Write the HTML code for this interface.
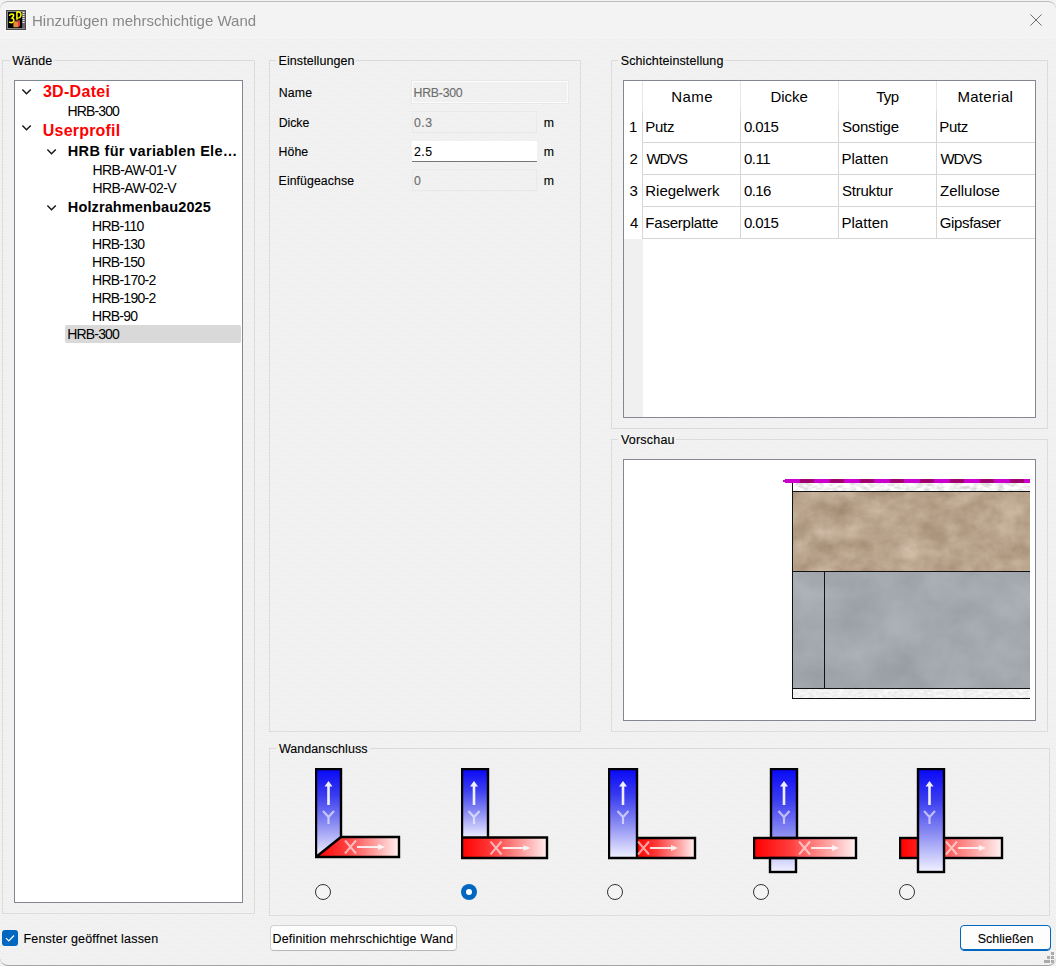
<!DOCTYPE html><html><head><meta charset="utf-8"><style>
html,body{margin:0;padding:0;}
body{width:1056px;height:966px;position:relative;overflow:hidden;background:#f0f0f0;font-family:"Liberation Sans", sans-serif;}
div{font-family:"Liberation Sans", sans-serif;}
</style></head><body>
<svg style="position:absolute;left:0;top:39px" width="1056" height="927"><defs><pattern id="dp" width="6" height="6" patternUnits="userSpaceOnUse"><rect width="6" height="6" fill="#f2f2f2"/><rect x="0" y="0" width="1" height="1" fill="#eaeaea"/><rect x="3" y="0" width="1" height="1" fill="#eaeaea"/><rect x="1" y="2" width="1" height="1" fill="#eaeaea"/><rect x="4" y="2" width="1" height="1" fill="#eaeaea"/><rect x="2" y="4" width="1" height="1" fill="#eaeaea"/><rect x="5" y="4" width="1" height="1" fill="#eaeaea"/></pattern></defs><rect width="1056" height="927" fill="url(#dp)"/></svg>
<div style="position:absolute;left:0px;top:0px;width:1056px;height:39px;box-sizing:border-box;background:#f3f3f3;"></div>
<div style="position:absolute;left:0;top:1px;width:1056px;height:965px;box-sizing:border-box;border-top:1px solid #bdbdbd;border-bottom:1px solid #a4a4a4;border-radius:8px;"></div>
<svg style="position:absolute;left:5px;top:9px" width="22" height="22" viewBox="-1 -1 22 22">
<rect x="-1" y="-1" width="22" height="22" fill="#fafafa"/>
<rect x="0" y="0" width="20" height="20" fill="#474747"/>
<rect x="1" y="1" width="18" height="18" fill="#8a8a8a"/>
<rect x="2" y="2" width="14.5" height="16" fill="#000"/>
<rect x="16.5" y="2" width="2.5" height="16" fill="#6a6a6a"/>
<rect x="16.5" y="2" width="2" height="1" fill="#e8e8e8"/><rect x="16.5" y="4" width="2" height="1" fill="#e8e8e8"/><rect x="16.5" y="6" width="2" height="1" fill="#e8e8e8"/><rect x="16.5" y="8" width="2" height="1" fill="#e8e8e8"/><rect x="16.5" y="10" width="2" height="1" fill="#e8e8e8"/><rect x="16.5" y="12" width="2" height="1" fill="#e8e8e8"/>
<path d="M3.6 5.2 Q5.5 3.3 7.3 4.4 Q8.3 6.2 6 8 Q8.6 9 7.6 11.6 Q6 13.4 3.6 12.2" fill="none" stroke="#ffff00" stroke-width="1.5" stroke-linecap="round"/>
<path d="M10.9 1.6 L10.9 9.8 M10.9 1.8 Q15.3 1.8 15 5 Q14.6 8.2 11 8.2" fill="none" stroke="#ffff00" stroke-width="1.5"/>
<path d="M7.4 11.5 Q10 10.2 13.8 10.6 L13.8 15.8 L11.9 17.2 L7.4 17.2 Z" fill="#e0902c"/>
<path d="M11.9 11.2 L14 10.6 L14 15.8 L11.9 17.2 Z" fill="#f03050"/>
<path d="M7.8 11.6 Q10.5 10.4 13.6 10.8 L12 12 Q9.5 12.2 7.8 11.6 Z" fill="#9a4a2a"/>
</svg>
<div style="position:absolute;left:31.80px;top:12px;height:17px;line-height:17px;font-size:15px;font-weight:normal;color:#888888;white-space:nowrap;letter-spacing:0.014px;-webkit-text-stroke:0.12px currentColor;-webkit-text-stroke:0;will-change:transform;">Hinzufügen mehrschichtige Wand</div>
<svg style="position:absolute;left:1028px;top:12px" width="16" height="16" viewBox="0 0 16 16"><path d="M2.5 2.5 L13.5 13.5 M13.5 2.5 L2.5 13.5" stroke="#6e6e6e" stroke-width="1" fill="none"/></svg>
<div style="position:absolute;left:2px;top:60px;width:8px;height:1px;box-sizing:border-box;background:#dcdcdc;"></div>
<div style="position:absolute;left:54px;top:60px;width:201px;height:1px;box-sizing:border-box;background:#dcdcdc;"></div>
<div style="position:absolute;left:2px;top:60px;width:1px;height:854px;box-sizing:border-box;background:#dcdcdc;"></div>
<div style="position:absolute;left:254px;top:60px;width:1px;height:854px;box-sizing:border-box;background:#dcdcdc;"></div>
<div style="position:absolute;left:2px;top:913px;width:253px;height:1px;box-sizing:border-box;background:#dcdcdc;"></div>
<div style="position:absolute;left:12.20px;top:54px;height:14px;line-height:14px;font-size:12.5px;font-weight:normal;color:#000;white-space:nowrap;letter-spacing:0.125px;-webkit-text-stroke:0.12px currentColor;">Wände</div>
<div style="position:absolute;left:269px;top:60px;width:7px;height:1px;box-sizing:border-box;background:#dcdcdc;"></div>
<div style="position:absolute;left:356px;top:60px;width:225px;height:1px;box-sizing:border-box;background:#dcdcdc;"></div>
<div style="position:absolute;left:269px;top:60px;width:1px;height:672px;box-sizing:border-box;background:#dcdcdc;"></div>
<div style="position:absolute;left:580px;top:60px;width:1px;height:672px;box-sizing:border-box;background:#dcdcdc;"></div>
<div style="position:absolute;left:269px;top:731px;width:312px;height:1px;box-sizing:border-box;background:#dcdcdc;"></div>
<div style="position:absolute;left:278.50px;top:54px;height:14px;line-height:14px;font-size:12.5px;font-weight:normal;color:#000;white-space:nowrap;letter-spacing:0.079px;-webkit-text-stroke:0.12px currentColor;">Einstellungen</div>
<div style="position:absolute;left:611px;top:60px;width:7px;height:1px;box-sizing:border-box;background:#dcdcdc;"></div>
<div style="position:absolute;left:725px;top:60px;width:323px;height:1px;box-sizing:border-box;background:#dcdcdc;"></div>
<div style="position:absolute;left:611px;top:60px;width:1px;height:369px;box-sizing:border-box;background:#dcdcdc;"></div>
<div style="position:absolute;left:1047px;top:60px;width:1px;height:369px;box-sizing:border-box;background:#dcdcdc;"></div>
<div style="position:absolute;left:611px;top:428px;width:437px;height:1px;box-sizing:border-box;background:#dcdcdc;"></div>
<div style="position:absolute;left:620.70px;top:54px;height:14px;line-height:14px;font-size:12.5px;font-weight:normal;color:#000;white-space:nowrap;letter-spacing:0.112px;-webkit-text-stroke:0.12px currentColor;">Schichteinstellung</div>
<div style="position:absolute;left:611px;top:439px;width:7px;height:1px;box-sizing:border-box;background:#dcdcdc;"></div>
<div style="position:absolute;left:676px;top:439px;width:372px;height:1px;box-sizing:border-box;background:#dcdcdc;"></div>
<div style="position:absolute;left:611px;top:439px;width:1px;height:293px;box-sizing:border-box;background:#dcdcdc;"></div>
<div style="position:absolute;left:1047px;top:439px;width:1px;height:293px;box-sizing:border-box;background:#dcdcdc;"></div>
<div style="position:absolute;left:611px;top:731px;width:437px;height:1px;box-sizing:border-box;background:#dcdcdc;"></div>
<div style="position:absolute;left:621.00px;top:433px;height:14px;line-height:14px;font-size:12.5px;font-weight:normal;color:#000;white-space:nowrap;letter-spacing:0.200px;-webkit-text-stroke:0.12px currentColor;">Vorschau</div>
<div style="position:absolute;left:269px;top:748px;width:7px;height:1px;box-sizing:border-box;background:#dcdcdc;"></div>
<div style="position:absolute;left:370px;top:748px;width:680px;height:1px;box-sizing:border-box;background:#dcdcdc;"></div>
<div style="position:absolute;left:269px;top:748px;width:1px;height:168px;box-sizing:border-box;background:#dcdcdc;"></div>
<div style="position:absolute;left:1049px;top:748px;width:1px;height:168px;box-sizing:border-box;background:#dcdcdc;"></div>
<div style="position:absolute;left:269px;top:915px;width:781px;height:1px;box-sizing:border-box;background:#dcdcdc;"></div>
<div style="position:absolute;left:278.90px;top:742px;height:14px;line-height:14px;font-size:12.5px;font-weight:normal;color:#000;white-space:nowrap;letter-spacing:0.067px;-webkit-text-stroke:0.12px currentColor;">Wandanschluss</div>
<div style="position:absolute;left:14px;top:80px;width:229px;height:823px;box-sizing:border-box;border:1px solid #828790;background:#fff;"></div>
<svg style="position:absolute;left:21px;top:87.5px" width="12" height="8" viewBox="0 0 12 8"><path d="M1.4 1.6 L5.5 5.7 L9.8 1.6" stroke="#161616" stroke-width="1.45" fill="none"/></svg>
<div style="position:absolute;left:42.90px;top:83px;height:17px;line-height:17px;font-size:16px;font-weight:bold;color:#ff0000;white-space:nowrap;letter-spacing:0.314px;">3D-Datei</div>
<div style="position:absolute;left:67.40px;top:103px;height:16px;line-height:16px;font-size:14px;font-weight:normal;color:#000;white-space:nowrap;letter-spacing:-0.850px;-webkit-text-stroke:0.12px currentColor;-webkit-text-stroke:0;">HRB-300</div>
<svg style="position:absolute;left:21px;top:123.5px" width="12" height="8" viewBox="0 0 12 8"><path d="M1.4 1.6 L5.5 5.7 L9.8 1.6" stroke="#161616" stroke-width="1.45" fill="none"/></svg>
<div style="position:absolute;left:42.80px;top:122px;height:17px;line-height:17px;font-size:16px;font-weight:bold;color:#ff0000;white-space:nowrap;letter-spacing:0.200px;">Userprofil</div>
<svg style="position:absolute;left:46px;top:147.5px" width="12" height="8" viewBox="0 0 12 8"><path d="M1.4 1.6 L5.5 5.7 L9.8 1.6" stroke="#161616" stroke-width="1.45" fill="none"/></svg>
<div style="position:absolute;left:67.80px;top:143px;height:16px;line-height:16px;font-size:14.5px;font-weight:bold;color:#000;white-space:nowrap;letter-spacing:0.324px;">HRB für variablen Ele…</div>
<div style="position:absolute;left:92.60px;top:162px;height:16px;line-height:16px;font-size:14px;font-weight:normal;color:#000;white-space:nowrap;letter-spacing:-0.630px;-webkit-text-stroke:0.12px currentColor;-webkit-text-stroke:0;">HRB-AW-01-V</div>
<div style="position:absolute;left:92.60px;top:180px;height:16px;line-height:16px;font-size:14px;font-weight:normal;color:#000;white-space:nowrap;letter-spacing:-0.630px;-webkit-text-stroke:0.12px currentColor;-webkit-text-stroke:0;">HRB-AW-02-V</div>
<svg style="position:absolute;left:46px;top:203.5px" width="12" height="8" viewBox="0 0 12 8"><path d="M1.4 1.6 L5.5 5.7 L9.8 1.6" stroke="#161616" stroke-width="1.45" fill="none"/></svg>
<div style="position:absolute;left:67.80px;top:199px;height:16px;line-height:16px;font-size:14.5px;font-weight:bold;color:#000;white-space:nowrap;letter-spacing:0.125px;">Holzrahmenbau2025</div>
<div style="position:absolute;left:92.10px;top:218px;height:16px;line-height:16px;font-size:14px;font-weight:normal;color:#000;white-space:nowrap;letter-spacing:-0.725px;-webkit-text-stroke:0.12px currentColor;-webkit-text-stroke:0;">HRB-110</div>
<div style="position:absolute;left:92.10px;top:236px;height:16px;line-height:16px;font-size:14px;font-weight:normal;color:#000;white-space:nowrap;letter-spacing:-0.767px;-webkit-text-stroke:0.12px currentColor;-webkit-text-stroke:0;">HRB-130</div>
<div style="position:absolute;left:92.10px;top:254px;height:16px;line-height:16px;font-size:14px;font-weight:normal;color:#000;white-space:nowrap;letter-spacing:-0.767px;-webkit-text-stroke:0.12px currentColor;-webkit-text-stroke:0;">HRB-150</div>
<div style="position:absolute;left:92.10px;top:272px;height:16px;line-height:16px;font-size:14px;font-weight:normal;color:#000;white-space:nowrap;letter-spacing:-0.738px;-webkit-text-stroke:0.12px currentColor;-webkit-text-stroke:0;">HRB-170-2</div>
<div style="position:absolute;left:92.10px;top:290px;height:16px;line-height:16px;font-size:14px;font-weight:normal;color:#000;white-space:nowrap;letter-spacing:-0.738px;-webkit-text-stroke:0.12px currentColor;-webkit-text-stroke:0;">HRB-190-2</div>
<div style="position:absolute;left:92.10px;top:308px;height:16px;line-height:16px;font-size:14px;font-weight:normal;color:#000;white-space:nowrap;letter-spacing:-0.760px;-webkit-text-stroke:0.12px currentColor;-webkit-text-stroke:0;">HRB-90</div>
<div style="position:absolute;left:65px;top:325px;width:176px;height:18px;background:#d9d9d9;border-radius:2px;"></div>
<div style="position:absolute;left:67.20px;top:326px;height:16px;line-height:16px;font-size:14px;font-weight:normal;color:#000;white-space:nowrap;letter-spacing:-0.817px;-webkit-text-stroke:0.12px currentColor;-webkit-text-stroke:0;">HRB-300</div>
<div style="position:absolute;left:278.70px;top:86px;height:14px;line-height:14px;font-size:12.3px;font-weight:normal;color:#000;white-space:nowrap;letter-spacing:0.167px;-webkit-text-stroke:0.12px currentColor;">Name</div>
<div style="position:absolute;left:278.70px;top:116px;height:14px;line-height:14px;font-size:12.3px;font-weight:normal;color:#000;white-space:nowrap;letter-spacing:-0.050px;-webkit-text-stroke:0.12px currentColor;">Dicke</div>
<div style="position:absolute;left:278.60px;top:145px;height:14px;line-height:14px;font-size:12.3px;font-weight:normal;color:#000;white-space:nowrap;letter-spacing:0.067px;-webkit-text-stroke:0.12px currentColor;">Höhe</div>
<div style="position:absolute;left:278.60px;top:174px;height:14px;line-height:14px;font-size:12.3px;font-weight:normal;color:#000;white-space:nowrap;letter-spacing:0.082px;-webkit-text-stroke:0.12px currentColor;">Einfügeachse</div>
<div style="position:absolute;left:411px;top:80px;width:158px;height:24px;box-sizing:border-box;border:1px solid #e9e9e9;"></div>
<div style="position:absolute;left:412px;top:81px;width:156px;height:22px;box-sizing:border-box;border:1px solid #fcfcfc;"></div>
<div style="position:absolute;left:413.50px;top:86px;height:14px;line-height:14px;font-size:12.3px;font-weight:normal;color:#6d6d6d;white-space:nowrap;letter-spacing:-0.233px;-webkit-text-stroke:0.12px currentColor;">HRB-300</div>
<div style="position:absolute;left:412px;top:111px;width:125px;height:22px;box-sizing:border-box;border:1px solid #e9e9e9;"></div>
<div style="position:absolute;left:414.00px;top:116px;height:14px;line-height:14px;font-size:12.3px;font-weight:normal;color:#6d6d6d;white-space:nowrap;letter-spacing:0.450px;-webkit-text-stroke:0.12px currentColor;">0.3</div>
<div style="position:absolute;left:412px;top:141px;width:125px;height:21px;box-sizing:border-box;background:#fff;border-bottom:1px solid #767676;"></div>
<div style="position:absolute;left:413.90px;top:145px;height:14px;line-height:14px;font-size:12.3px;font-weight:normal;color:#000;white-space:nowrap;letter-spacing:0.500px;-webkit-text-stroke:0.12px currentColor;">2.5</div>
<div style="position:absolute;left:412px;top:169px;width:125px;height:22px;box-sizing:border-box;border:1px solid #e9e9e9;"></div>
<div style="position:absolute;left:414.00px;top:174px;height:14px;line-height:14px;font-size:12.3px;font-weight:normal;color:#6d6d6d;white-space:nowrap;letter-spacing:0.000px;-webkit-text-stroke:0.12px currentColor;">0</div>
<div style="position:absolute;left:543.70px;top:116px;height:14px;line-height:14px;font-size:12.3px;font-weight:normal;color:#000;white-space:nowrap;letter-spacing:0.000px;-webkit-text-stroke:0.12px currentColor;">m</div>
<div style="position:absolute;left:543.70px;top:145px;height:14px;line-height:14px;font-size:12.3px;font-weight:normal;color:#000;white-space:nowrap;letter-spacing:0.000px;-webkit-text-stroke:0.12px currentColor;">m</div>
<div style="position:absolute;left:543.70px;top:174px;height:14px;line-height:14px;font-size:12.3px;font-weight:normal;color:#000;white-space:nowrap;letter-spacing:0.000px;-webkit-text-stroke:0.12px currentColor;">m</div>
<div style="position:absolute;left:623px;top:80px;width:413px;height:338px;box-sizing:border-box;border:1px solid #828790;background:#fff;"></div>
<div style="position:absolute;left:624px;top:239px;width:19px;height:178px;box-sizing:border-box;background:#f0f0f0;"></div>
<div style="position:absolute;left:642px;top:81px;width:1px;height:30px;box-sizing:border-box;background:#e6e6e6;"></div>
<div style="position:absolute;left:642px;top:111px;width:1px;height:128px;box-sizing:border-box;background:#d6d6d6;"></div>
<div style="position:absolute;left:740px;top:81px;width:1px;height:30px;box-sizing:border-box;background:#e6e6e6;"></div>
<div style="position:absolute;left:740px;top:111px;width:1px;height:128px;box-sizing:border-box;background:#d6d6d6;"></div>
<div style="position:absolute;left:838px;top:81px;width:1px;height:30px;box-sizing:border-box;background:#e6e6e6;"></div>
<div style="position:absolute;left:838px;top:111px;width:1px;height:128px;box-sizing:border-box;background:#d6d6d6;"></div>
<div style="position:absolute;left:936px;top:81px;width:1px;height:30px;box-sizing:border-box;background:#e6e6e6;"></div>
<div style="position:absolute;left:936px;top:111px;width:1px;height:128px;box-sizing:border-box;background:#d6d6d6;"></div>
<div style="position:absolute;left:643px;top:142px;width:392px;height:1px;box-sizing:border-box;background:#d6d6d6;"></div>
<div style="position:absolute;left:643px;top:174px;width:392px;height:1px;box-sizing:border-box;background:#d6d6d6;"></div>
<div style="position:absolute;left:643px;top:206px;width:392px;height:1px;box-sizing:border-box;background:#d6d6d6;"></div>
<div style="position:absolute;left:643px;top:238px;width:392px;height:1px;box-sizing:border-box;background:#d6d6d6;"></div>
<div style="position:absolute;left:671.20px;top:88px;height:17px;line-height:17px;font-size:15px;font-weight:normal;color:#000;white-space:nowrap;letter-spacing:0.433px;-webkit-text-stroke:0.12px currentColor;-webkit-text-stroke:0;">Name</div>
<div style="position:absolute;left:770.50px;top:88px;height:17px;line-height:17px;font-size:15px;font-weight:normal;color:#000;white-space:nowrap;letter-spacing:-0.025px;-webkit-text-stroke:0.12px currentColor;-webkit-text-stroke:0;">Dicke</div>
<div style="position:absolute;left:876.20px;top:88px;height:17px;line-height:17px;font-size:15px;font-weight:normal;color:#000;white-space:nowrap;letter-spacing:-0.650px;-webkit-text-stroke:0.12px currentColor;-webkit-text-stroke:0;">Typ</div>
<div style="position:absolute;left:957.40px;top:88px;height:17px;line-height:17px;font-size:15px;font-weight:normal;color:#000;white-space:nowrap;letter-spacing:0.314px;-webkit-text-stroke:0.12px currentColor;-webkit-text-stroke:0;">Material</div>
<div style="position:absolute;left:629.10px;top:118px;height:17px;line-height:17px;font-size:15px;font-weight:normal;color:#000;white-space:nowrap;letter-spacing:0.000px;-webkit-text-stroke:0.12px currentColor;-webkit-text-stroke:0;">1</div>
<div style="position:absolute;left:645.30px;top:118px;height:17px;line-height:17px;font-size:15px;font-weight:normal;color:#000;white-space:nowrap;letter-spacing:-0.300px;-webkit-text-stroke:0.12px currentColor;-webkit-text-stroke:0;">Putz</div>
<div style="position:absolute;left:743.90px;top:118px;height:17px;line-height:17px;font-size:15px;font-weight:normal;color:#000;white-space:nowrap;letter-spacing:-0.625px;-webkit-text-stroke:0.12px currentColor;-webkit-text-stroke:0;">0.015</div>
<div style="position:absolute;left:841.90px;top:118px;height:17px;line-height:17px;font-size:15px;font-weight:normal;color:#000;white-space:nowrap;letter-spacing:-0.171px;-webkit-text-stroke:0.12px currentColor;-webkit-text-stroke:0;">Sonstige</div>
<div style="position:absolute;left:939.30px;top:118px;height:17px;line-height:17px;font-size:15px;font-weight:normal;color:#000;white-space:nowrap;letter-spacing:-0.333px;-webkit-text-stroke:0.12px currentColor;-webkit-text-stroke:0;">Putz</div>
<div style="position:absolute;left:629.50px;top:150px;height:17px;line-height:17px;font-size:15px;font-weight:normal;color:#000;white-space:nowrap;letter-spacing:0.000px;-webkit-text-stroke:0.12px currentColor;-webkit-text-stroke:0;">2</div>
<div style="position:absolute;left:646.40px;top:150px;height:17px;line-height:17px;font-size:15px;font-weight:normal;color:#000;white-space:nowrap;letter-spacing:-1.133px;-webkit-text-stroke:0.12px currentColor;-webkit-text-stroke:0;">WDVS</div>
<div style="position:absolute;left:743.90px;top:150px;height:17px;line-height:17px;font-size:15px;font-weight:normal;color:#000;white-space:nowrap;letter-spacing:-0.500px;-webkit-text-stroke:0.12px currentColor;-webkit-text-stroke:0;">0.11</div>
<div style="position:absolute;left:841.40px;top:150px;height:17px;line-height:17px;font-size:15px;font-weight:normal;color:#000;white-space:nowrap;letter-spacing:0.050px;-webkit-text-stroke:0.12px currentColor;-webkit-text-stroke:0;">Platten</div>
<div style="position:absolute;left:940.40px;top:150px;height:17px;line-height:17px;font-size:15px;font-weight:normal;color:#000;white-space:nowrap;letter-spacing:-1.067px;-webkit-text-stroke:0.12px currentColor;-webkit-text-stroke:0;">WDVS</div>
<div style="position:absolute;left:629.60px;top:182px;height:17px;line-height:17px;font-size:15px;font-weight:normal;color:#000;white-space:nowrap;letter-spacing:0.000px;-webkit-text-stroke:0.12px currentColor;-webkit-text-stroke:0;">3</div>
<div style="position:absolute;left:645.30px;top:182px;height:17px;line-height:17px;font-size:15px;font-weight:normal;color:#000;white-space:nowrap;letter-spacing:-0.011px;-webkit-text-stroke:0.12px currentColor;-webkit-text-stroke:0;">Riegelwerk</div>
<div style="position:absolute;left:743.90px;top:182px;height:17px;line-height:17px;font-size:15px;font-weight:normal;color:#000;white-space:nowrap;letter-spacing:-0.600px;-webkit-text-stroke:0.12px currentColor;-webkit-text-stroke:0;">0.16</div>
<div style="position:absolute;left:841.90px;top:182px;height:17px;line-height:17px;font-size:15px;font-weight:normal;color:#000;white-space:nowrap;letter-spacing:-0.200px;-webkit-text-stroke:0.12px currentColor;-webkit-text-stroke:0;">Struktur</div>
<div style="position:absolute;left:940.00px;top:182px;height:17px;line-height:17px;font-size:15px;font-weight:normal;color:#000;white-space:nowrap;letter-spacing:-0.013px;-webkit-text-stroke:0.12px currentColor;-webkit-text-stroke:0;">Zellulose</div>
<div style="position:absolute;left:629.90px;top:214px;height:17px;line-height:17px;font-size:15px;font-weight:normal;color:#000;white-space:nowrap;letter-spacing:0.000px;-webkit-text-stroke:0.12px currentColor;-webkit-text-stroke:0;">4</div>
<div style="position:absolute;left:645.30px;top:214px;height:17px;line-height:17px;font-size:15px;font-weight:normal;color:#000;white-space:nowrap;letter-spacing:-0.210px;-webkit-text-stroke:0.12px currentColor;-webkit-text-stroke:0;">Faserplatte</div>
<div style="position:absolute;left:743.90px;top:214px;height:17px;line-height:17px;font-size:15px;font-weight:normal;color:#000;white-space:nowrap;letter-spacing:-0.625px;-webkit-text-stroke:0.12px currentColor;-webkit-text-stroke:0;">0.015</div>
<div style="position:absolute;left:841.40px;top:214px;height:17px;line-height:17px;font-size:15px;font-weight:normal;color:#000;white-space:nowrap;letter-spacing:0.050px;-webkit-text-stroke:0.12px currentColor;-webkit-text-stroke:0;">Platten</div>
<div style="position:absolute;left:939.80px;top:214px;height:17px;line-height:17px;font-size:15px;font-weight:normal;color:#000;white-space:nowrap;letter-spacing:-0.375px;-webkit-text-stroke:0.12px currentColor;-webkit-text-stroke:0;">Gipsfaser</div>
<div style="position:absolute;left:623px;top:459px;width:413px;height:262px;box-sizing:border-box;border:1px solid #828790;background:#fff;"></div>
<svg style="position:absolute;left:624px;top:460px" width="411" height="260">
<defs>
<filter id="fbrn" x="0" y="0" width="100%" height="100%" color-interpolation-filters="sRGB">
<feTurbulence type="fractalNoise" baseFrequency="0.04 0.05" numOctaves="5" seed="11" result="n"/>
<feColorMatrix in="n" type="matrix" values="0.22 0 0 0 0.615  0.24 0 0 0 0.52  0.26 0 0 0 0.42  0 0 0 0 1"/>
</filter>
<filter id="fgry" x="0" y="0" width="100%" height="100%" color-interpolation-filters="sRGB">
<feTurbulence type="fractalNoise" baseFrequency="0.02 0.025" numOctaves="4" seed="2" result="n"/>
<feColorMatrix in="n" type="matrix" values="0.12 0 0 0 0.58  0.12 0 0 0 0.6  0.12 0 0 0 0.625  0 0 0 0 1"/>
</filter>
<filter id="fput" x="0" y="0" width="100%" height="100%" color-interpolation-filters="sRGB">
<feTurbulence type="fractalNoise" baseFrequency="0.15 0.3" numOctaves="2" seed="5" result="n"/>
<feColorMatrix in="n" type="matrix" values="0.35 0 0 0 0.78  0.35 0 0 0 0.78  0.35 0 0 0 0.78  0 0 0 0 1"/>
</filter>
<filter id="fput2" x="0" y="0" width="100%" height="100%" color-interpolation-filters="sRGB">
<feTurbulence type="fractalNoise" baseFrequency="0.2 0.4" numOctaves="2" seed="9" result="n"/>
<feColorMatrix in="n" type="matrix" values="0.15 0 0 0 0.87  0.15 0 0 0 0.87  0.15 0 0 0 0.87  0 0 0 0 1"/>
</filter>
</defs>
<rect x="168" y="23" width="238" height="8" fill="#f2f2f2" filter="url(#fput)"/>
<rect x="168" y="32" width="238" height="79" filter="url(#fbrn)"/>
<rect x="168" y="112" width="238" height="116" filter="url(#fgry)"/>
<rect x="168" y="229" width="238" height="9" fill="#f2f2f2" filter="url(#fput2)"/>
<rect x="168" y="23" width="1" height="216" fill="#111"/>
<rect x="168" y="31" width="238" height="1" fill="#111"/>
<rect x="168" y="111" width="238" height="1" fill="#111"/>
<rect x="200" y="112" width="1" height="116" fill="#111"/>
<rect x="168" y="228" width="238" height="1" fill="#111"/>
<rect x="168" y="238" width="238" height="1" fill="#111"/>
<rect x="161" y="19" width="245" height="4" fill="#cc00cc"/>
<rect x="159" y="20" width="3" height="2" fill="#cc00cc"/>
<path d="M176 19h14v4h-14z M206 19h14v4h-14z M236 19h14v4h-14z M266 19h14v4h-14z M296 19h14v4h-14z M326 19h14v4h-14z M356 19h14v4h-14z M386 19h14v4h-14z" fill="#a0006c"/>
</svg>
<svg width="0" height="0" style="position:absolute"><defs>
<linearGradient id="bl" x1="0" y1="0" x2="0" y2="1"><stop offset="0" stop-color="#0808f6"/><stop offset="0.3" stop-color="#3a3cf0"/><stop offset="0.6" stop-color="#8486f2"/><stop offset="1" stop-color="#f2f2ff"/></linearGradient>
<linearGradient id="rd" x1="0" y1="0" x2="1" y2="0"><stop offset="0" stop-color="#ff0000"/><stop offset="0.35" stop-color="#ff3c3c"/><stop offset="0.7" stop-color="#ff9c9c"/><stop offset="1" stop-color="#fff2f2"/></linearGradient>
</defs></svg>
<svg style="position:absolute;left:315px;top:768px" width="86" height="91" viewBox="0 0 86 91"><path d="M1 1 H26 V69 L1 89 Z" fill="url(#bl)"/><path d="M26 69 H84 V89 H1 Z" fill="url(#rd)"/><path d="M1 1 H26 V69 H84 V89 H1 Z M26 69 L1 89" stroke="#000" stroke-width="2.4" fill="none" stroke-linejoin="miter"/><path d="M13.5 13 L17.5 18.5 L14.8 18.5 L14.8 37 L12.2 37 L12.2 18.5 L9.5 18.5 Z" fill="#fff" opacity="0.92"/><path d="M8.0 43 L13.5 49 L19.0 43 M13.5 49 L13.5 56" stroke="#fff" stroke-width="2.2" fill="none" opacity="0.6"/><path d="M30 72.5 L41 85.5 M41 72.5 L30 85.5" stroke="#fff" stroke-width="2" fill="none" opacity="0.6"/><path d="M42 78 L63 78 L63 76 L70 79 L63 82 L63 80 L42 80 Z" fill="#fff" opacity="0.85"/></svg>
<svg style="position:absolute;left:461px;top:768px" width="88" height="92" viewBox="0 0 88 92"><rect x="1" y="1" width="26" height="69.5" fill="url(#bl)"/><rect x="1" y="69.5" width="86" height="20.5" fill="url(#rd)"/><path d="M1 1 H27 V69.5 H86 V90 H1 Z M1 69.5 H27" stroke="#000" stroke-width="2.4" fill="none"/><path d="M13 13 L17 18.5 L14.3 18.5 L14.3 37 L11.7 37 L11.7 18.5 L9 18.5 Z" fill="#fff" opacity="0.92"/><path d="M7.5 43 L13 49 L18.5 43 M13 49 L13 56" stroke="#fff" stroke-width="2.2" fill="none" opacity="0.6"/><path d="M29.5 73.5 L40.5 86.5 M40.5 73.5 L29.5 86.5" stroke="#fff" stroke-width="2" fill="none" opacity="0.6"/><path d="M41.5 79 L62.5 79 L62.5 77 L69.5 80 L62.5 83 L62.5 81 L41.5 81 Z" fill="#fff" opacity="0.85"/></svg>
<svg style="position:absolute;left:608px;top:768px" width="89" height="92" viewBox="0 0 89 92"><rect x="1" y="1" width="28" height="89" fill="url(#bl)"/><rect x="29" y="70" width="58" height="20" fill="url(#rd)"/><path d="M1 1 H29 V70 H87 V90 H1 Z M29 70 V90" stroke="#000" stroke-width="2.4" fill="none"/><path d="M15 13 L19 18.5 L16.3 18.5 L16.3 37 L13.7 37 L13.7 18.5 L11 18.5 Z" fill="#fff" opacity="0.92"/><path d="M9.5 43 L15 49 L20.5 43 M15 49 L15 56" stroke="#fff" stroke-width="2.2" fill="none" opacity="0.6"/><path d="M30 73.5 L41 86.5 M41 73.5 L30 86.5" stroke="#fff" stroke-width="2" fill="none" opacity="0.6"/><path d="M42 79 L63 79 L63 77 L70 80 L63 83 L63 81 L42 81 Z" fill="#fff" opacity="0.85"/></svg>
<svg style="position:absolute;left:753px;top:768px" width="105" height="106" viewBox="0 0 105 106"><rect x="18" y="1" width="26" height="103" fill="url(#bl)"/><rect x="1" y="70" width="102" height="20" fill="url(#rd)"/><rect x="18" y="1" width="26" height="69" stroke="#000" stroke-width="2.4" fill="none"/><rect x="17" y="90" width="26" height="14" stroke="#000" stroke-width="2.4" fill="none"/><rect x="1" y="70" width="102" height="20" stroke="#000" stroke-width="2.4" fill="none"/><path d="M31 13 L35 18.5 L32.3 18.5 L32.3 37 L29.7 37 L29.7 18.5 L27 18.5 Z" fill="#fff" opacity="0.92"/><path d="M25.5 43 L31 49 L36.5 43 M31 49 L31 56" stroke="#fff" stroke-width="2.2" fill="none" opacity="0.6"/><path d="M46 73.5 L57 86.5 M57 73.5 L46 86.5" stroke="#fff" stroke-width="2" fill="none" opacity="0.6"/><path d="M58 79 L79 79 L79 77 L86 80 L79 83 L79 81 L58 81 Z" fill="#fff" opacity="0.85"/></svg>
<svg style="position:absolute;left:899px;top:768px" width="105" height="106" viewBox="0 0 105 106"><rect x="1" y="70" width="102" height="20" fill="url(#rd)"/><rect x="1" y="70" width="102" height="20" stroke="#000" stroke-width="2.4" fill="none"/><rect x="19" y="1" width="26" height="103" fill="url(#bl)"/><rect x="19" y="1" width="26" height="103" stroke="#000" stroke-width="2.4" fill="none"/><path d="M30.5 13 L34.5 18.5 L31.8 18.5 L31.8 37 L29.2 37 L29.2 18.5 L26.5 18.5 Z" fill="#fff" opacity="0.92"/><path d="M25.0 43 L30.5 49 L36.0 43 M30.5 49 L30.5 56" stroke="#fff" stroke-width="2.2" fill="none" opacity="0.6"/><path d="M47 73.5 L58 86.5 M58 73.5 L47 86.5" stroke="#fff" stroke-width="2" fill="none" opacity="0.6"/><path d="M59 79 L80 79 L80 77 L87 80 L80 83 L80 81 L59 81 Z" fill="#fff" opacity="0.85"/></svg>
<div style="position:absolute;left:315px;top:884px;width:16px;height:16px;box-sizing:border-box;border-radius:50%;border:1px solid #333;background:#f4f4f4;"></div>
<div style="position:absolute;left:461px;top:884px;width:16px;height:16px;border-radius:50%;background:#0067c0;"></div>
<div style="position:absolute;left:466px;top:889px;width:6px;height:6px;border-radius:50%;background:#fff;"></div>
<div style="position:absolute;left:607px;top:884px;width:16px;height:16px;box-sizing:border-box;border-radius:50%;border:1px solid #333;background:#f4f4f4;"></div>
<div style="position:absolute;left:753px;top:884px;width:16px;height:16px;box-sizing:border-box;border-radius:50%;border:1px solid #333;background:#f4f4f4;"></div>
<div style="position:absolute;left:899px;top:884px;width:16px;height:16px;box-sizing:border-box;border-radius:50%;border:1px solid #333;background:#f4f4f4;"></div>
<div style="position:absolute;left:2px;top:930px;width:16px;height:16px;border-radius:3px;background:#0067c0;"></div>
<svg style="position:absolute;left:2px;top:930px" width="16" height="16" viewBox="0 0 16 16"><path d="M4 8.2 L6.8 11 L12 5.5" stroke="#fff" stroke-width="1.2" fill="none"/></svg>
<div style="position:absolute;left:23.50px;top:932px;height:14px;line-height:14px;font-size:12.5px;font-weight:normal;color:#000;white-space:nowrap;letter-spacing:0.195px;-webkit-text-stroke:0.12px currentColor;">Fenster geöffnet lassen</div>
<div style="position:absolute;left:270px;top:925px;width:187px;height:26px;box-sizing:border-box;border:1px solid #d0d0d0;border-bottom-color:#b8b8b8;border-radius:4px;background:#fdfdfd;"></div>
<div style="position:absolute;left:272.50px;top:932px;height:14px;line-height:14px;font-size:12.5px;font-weight:normal;color:#000;white-space:nowrap;letter-spacing:0.183px;-webkit-text-stroke:0.12px currentColor;">Definition mehrschichtige Wand</div>
<div style="position:absolute;left:960px;top:925px;width:91px;height:26px;box-sizing:border-box;border:1px solid #0067c0;border-radius:4px;background:#fdfdfd;box-shadow:inset 0 -1px 0 #0067c0;"></div>
<div style="position:absolute;left:977.70px;top:932px;height:14px;line-height:14px;font-size:12.5px;font-weight:normal;color:#000;white-space:nowrap;letter-spacing:0.025px;-webkit-text-stroke:0.12px currentColor;">Schließen</div>
<div style="position:absolute;left:1051px;top:952px;width:3px;height:3px;box-sizing:border-box;background:#ababab;"></div>
<div style="position:absolute;left:1051px;top:956px;width:3px;height:3px;box-sizing:border-box;background:#ababab;"></div>
<div style="position:absolute;left:1047px;top:956px;width:3px;height:3px;box-sizing:border-box;background:#ababab;"></div>
<div style="position:absolute;left:1051px;top:960px;width:3px;height:3px;box-sizing:border-box;background:#ababab;"></div>
<div style="position:absolute;left:1047px;top:960px;width:3px;height:3px;box-sizing:border-box;background:#ababab;"></div>
<div style="position:absolute;left:1044px;top:960px;width:3px;height:3px;box-sizing:border-box;background:#ababab;"></div>
</body></html>
